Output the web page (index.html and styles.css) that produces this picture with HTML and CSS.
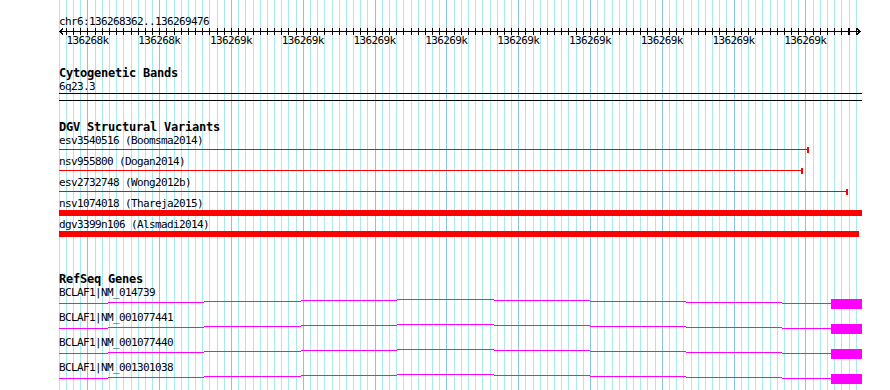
FILE: index.html
```html
<!DOCTYPE html>
<html lang="en">
<head>
  <meta charset="UTF-8">
  <title>chr6:136268362..136269476</title>
  <link rel="stylesheet" href="styles.css">
</head>
<body>

  <div class="panel">

    <div class="ruler">
      <div class="seqname">chr6:136268362..136269476</div>
      <div class="axis">
        <div class="ticks"></div>
        <svg class="axis-line" width="803" height="7" viewBox="0 0 803 7">
          <path d="M1 3.5H801M4 0.5L1 3.5L4 6.5M798 0.5L801 3.5L798 6.5"/>
        </svg>
      </div>
      <div class="ruler-labels">
        <span>136268k</span>
        <span>136268k</span>
        <span>136269k</span>
        <span>136269k</span>
        <span>136269k</span>
        <span>136269k</span>
        <span>136269k</span>
        <span>136269k</span>
        <span>136269k</span>
        <span>136269k</span>
        <span>136269k</span>
      </div>
    </div>

    <section class="track track-cyto">
      <div class="track-title">Cytogenetic Bands</div>
      <div class="feature-label">6q23.3</div>
      <div class="cytoband"></div>
    </section>

    <section class="track track-dgv">
      <div class="track-title">DGV Structural Variants</div>
      <div class="variant">
        <div class="feature-label">esv3540516 (Boomsma2014)</div>
        <div class="variant-line" style="width:750px"></div>
      </div>
      <div class="variant">
        <div class="feature-label">nsv955800 (Dogan2014)</div>
        <div class="variant-line" style="width:744px"></div>
      </div>
      <div class="variant">
        <div class="feature-label">esv2732748 (Wong2012b)</div>
        <div class="variant-line" style="width:789px"></div>
      </div>
      <div class="variant">
        <div class="feature-label">nsv1074018 (Thareja2015)</div>
        <div class="variant-bar" style="width:803px"></div>
      </div>
      <div class="variant">
        <div class="feature-label">dgv3399n106 (Alsmadi2014)</div>
        <div class="variant-bar" style="width:800px"></div>
      </div>
    </section>

    <section class="track track-genes">
      <div class="track-title">RefSeq Genes</div>
      <div class="gene">
        <div class="feature-label">BCLAF1|NM_014739</div>
        <svg class="transcript" width="803" height="10" viewBox="0 0 803 10">
          <path d="M0 4.5H49M49 3.5H145M145 2.5H242M242 1.5H338M338 .5H435M435 1.5H531M531 2.5H627M627 3.5H723M723 4.5H772"/>
          <rect x="772" y="0" width="31" height="10"/>
        </svg>
      </div>
      <div class="gene">
        <div class="feature-label">BCLAF1|NM_001077441</div>
        <svg class="transcript" width="803" height="10" viewBox="0 0 803 10">
          <path d="M0 4.5H49M49 3.5H145M145 2.5H242M242 1.5H338M338 .5H435M435 1.5H531M531 2.5H627M627 3.5H723M723 4.5H772"/>
          <rect x="772" y="0" width="31" height="10"/>
        </svg>
      </div>
      <div class="gene">
        <div class="feature-label">BCLAF1|NM_001077440</div>
        <svg class="transcript" width="803" height="10" viewBox="0 0 803 10">
          <path d="M0 4.5H49M49 3.5H145M145 2.5H242M242 1.5H338M338 .5H435M435 1.5H531M531 2.5H627M627 3.5H723M723 4.5H772"/>
          <rect x="772" y="0" width="31" height="10"/>
        </svg>
      </div>
      <div class="gene">
        <div class="feature-label">BCLAF1|NM_001301038</div>
        <svg class="transcript" width="803" height="10" viewBox="0 0 803 10">
          <path d="M0 4.5H49M49 3.5H145M145 2.5H242M242 1.5H338M338 .5H435M435 1.5H531M531 2.5H627M627 3.5H723M723 4.5H772"/>
          <rect x="772" y="0" width="31" height="10"/>
        </svg>
      </div>
    </section>

  </div>

</body>
</html>
```

FILE: styles.css
```css
body {
  margin: 0;
  background-color: #fff;
  font-family: "DejaVu Sans Mono", "Liberation Mono", monospace;
  font-size: 11px;
  letter-spacing: -0.62px;
  color: #000;
}

/* the whole track image, with the grid drawn behind it */
.panel {
  width: 803px;
  height: 390px;
  margin-left: 59px;
  padding-top: 15px;
  box-sizing: border-box;
  background-image:
    repeating-linear-gradient(to right, transparent 0 28.42px, #88c3e6 28.42px 29.42px, transparent 29.42px 71.8px),
    repeating-linear-gradient(to right, #a8e9ee 0 0.7px, transparent 0.7px 6.88px, #a8e9ee 6.88px 7.18px);
}

.seqname {
  height: 13px;
  line-height: 13px;
  white-space: nowrap;
}

.axis {
  display: grid;
  height: 7px;
}

.axis > * {
  grid-area: 1 / 1;
}

.ticks {
  margin-left: 3px;
  height: 7px;
  background-image: repeating-linear-gradient(to right, transparent 0 3.88px, #000 3.88px 4.88px, transparent 4.88px 7.18px);
}

.axis-line path {
  fill: none;
  stroke: #000;
  stroke-width: 1;
  shape-rendering: crispEdges;
}

.ruler-labels {
  display: flex;
  margin-left: -7.5px;
  line-height: 12px;
}

.ruler-labels span {
  flex: 0 0 71.8px;
  text-align: center;
  white-space: nowrap;
}

.track-title {
  height: 13px;
  line-height: 13px;
  font-size: 12px;
  font-weight: bold;
  letter-spacing: -0.22px;
  white-space: nowrap;
}

.feature-label {
  height: 13px;
  line-height: 13px;
  white-space: nowrap;
}

.track-cyto {
  margin-top: 20px;
}

.cytoband {
  height: 6px;
  border-top: 1px solid #000;
  border-bottom: 1px solid #000;
}

.track-dgv {
  margin-top: 20px;
}

.variant {
  height: 21px;
}

.variant-line {
  height: 6px;
  box-sizing: border-box;
  border-right: 2px solid #f00;
  background: linear-gradient(#f00, #f00) 0 2px / 100% 1px no-repeat;
}

.variant-bar {
  height: 6px;
  background-color: #f00;
}

.track-genes {
  margin-top: 34px;
}

.gene {
  height: 25px;
}

.transcript {
  display: block;
}

.transcript path {
  fill: none;
  stroke: #f0f;
  stroke-width: 1;
  shape-rendering: crispEdges;
}

.transcript rect {
  fill: #f0f;
}
```
